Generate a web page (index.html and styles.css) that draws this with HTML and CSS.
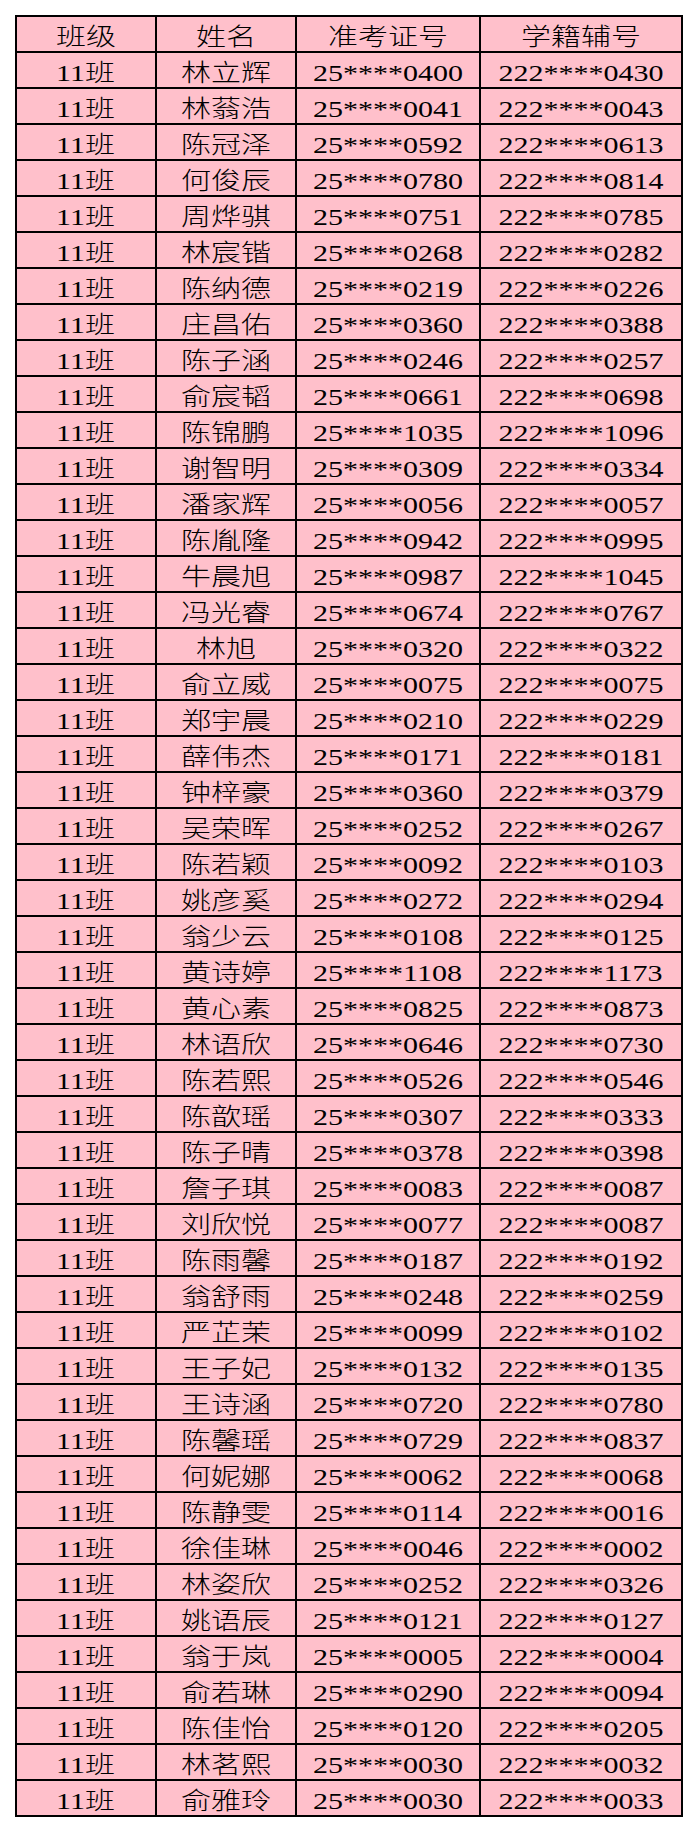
FILE: index.html
```html
<!DOCTYPE html>
<html lang="zh-CN">
<head>
<meta charset="utf-8">
<title>11班名单</title>
<link rel="stylesheet" href="styles.css">
</head>
<body>
<table class="roster">
<colgroup><col class="c1"><col class="c2"><col class="c3"><col class="c4"></colgroup>
<thead>
<tr><th><span class="t">班级</span></th><th><span class="t">姓名</span></th><th><span class="t">准考证号</span></th><th><span class="t">学籍辅号</span></th></tr>
</thead>
<tbody>
<tr><td><span class="t">11班</span></td><td><span class="t">林立辉</span></td><td><span class="t">25****0400</span></td><td><span class="t">222****0430</span></td></tr>
<tr><td><span class="t">11班</span></td><td><span class="t">林蓊浩</span></td><td><span class="t">25****0041</span></td><td><span class="t">222****0043</span></td></tr>
<tr><td><span class="t">11班</span></td><td><span class="t">陈冠泽</span></td><td><span class="t">25****0592</span></td><td><span class="t">222****0613</span></td></tr>
<tr><td><span class="t">11班</span></td><td><span class="t">何俊辰</span></td><td><span class="t">25****0780</span></td><td><span class="t">222****0814</span></td></tr>
<tr><td><span class="t">11班</span></td><td><span class="t">周烨骐</span></td><td><span class="t">25****0751</span></td><td><span class="t">222****0785</span></td></tr>
<tr><td><span class="t">11班</span></td><td><span class="t">林宸锴</span></td><td><span class="t">25****0268</span></td><td><span class="t">222****0282</span></td></tr>
<tr><td><span class="t">11班</span></td><td><span class="t">陈纳德</span></td><td><span class="t">25****0219</span></td><td><span class="t">222****0226</span></td></tr>
<tr><td><span class="t">11班</span></td><td><span class="t">庄昌佑</span></td><td><span class="t">25****0360</span></td><td><span class="t">222****0388</span></td></tr>
<tr><td><span class="t">11班</span></td><td><span class="t">陈子涵</span></td><td><span class="t">25****0246</span></td><td><span class="t">222****0257</span></td></tr>
<tr><td><span class="t">11班</span></td><td><span class="t">俞宸韬</span></td><td><span class="t">25****0661</span></td><td><span class="t">222****0698</span></td></tr>
<tr><td><span class="t">11班</span></td><td><span class="t">陈锦鹏</span></td><td><span class="t">25****1035</span></td><td><span class="t">222****1096</span></td></tr>
<tr><td><span class="t">11班</span></td><td><span class="t">谢智明</span></td><td><span class="t">25****0309</span></td><td><span class="t">222****0334</span></td></tr>
<tr><td><span class="t">11班</span></td><td><span class="t">潘家辉</span></td><td><span class="t">25****0056</span></td><td><span class="t">222****0057</span></td></tr>
<tr><td><span class="t">11班</span></td><td><span class="t">陈胤隆</span></td><td><span class="t">25****0942</span></td><td><span class="t">222****0995</span></td></tr>
<tr><td><span class="t">11班</span></td><td><span class="t">牛晨旭</span></td><td><span class="t">25****0987</span></td><td><span class="t">222****1045</span></td></tr>
<tr><td><span class="t">11班</span></td><td><span class="t">冯光睿</span></td><td><span class="t">25****0674</span></td><td><span class="t">222****0767</span></td></tr>
<tr><td><span class="t">11班</span></td><td><span class="t">林旭</span></td><td><span class="t">25****0320</span></td><td><span class="t">222****0322</span></td></tr>
<tr><td><span class="t">11班</span></td><td><span class="t">俞立威</span></td><td><span class="t">25****0075</span></td><td><span class="t">222****0075</span></td></tr>
<tr><td><span class="t">11班</span></td><td><span class="t">郑宇晨</span></td><td><span class="t">25****0210</span></td><td><span class="t">222****0229</span></td></tr>
<tr><td><span class="t">11班</span></td><td><span class="t">薛伟杰</span></td><td><span class="t">25****0171</span></td><td><span class="t">222****0181</span></td></tr>
<tr><td><span class="t">11班</span></td><td><span class="t">钟梓豪</span></td><td><span class="t">25****0360</span></td><td><span class="t">222****0379</span></td></tr>
<tr><td><span class="t">11班</span></td><td><span class="t">吴荣晖</span></td><td><span class="t">25****0252</span></td><td><span class="t">222****0267</span></td></tr>
<tr><td><span class="t">11班</span></td><td><span class="t">陈若颖</span></td><td><span class="t">25****0092</span></td><td><span class="t">222****0103</span></td></tr>
<tr><td><span class="t">11班</span></td><td><span class="t">姚彦奚</span></td><td><span class="t">25****0272</span></td><td><span class="t">222****0294</span></td></tr>
<tr><td><span class="t">11班</span></td><td><span class="t">翁少云</span></td><td><span class="t">25****0108</span></td><td><span class="t">222****0125</span></td></tr>
<tr><td><span class="t">11班</span></td><td><span class="t">黄诗婷</span></td><td><span class="t">25****1108</span></td><td><span class="t">222****1173</span></td></tr>
<tr><td><span class="t">11班</span></td><td><span class="t">黄心素</span></td><td><span class="t">25****0825</span></td><td><span class="t">222****0873</span></td></tr>
<tr><td><span class="t">11班</span></td><td><span class="t">林语欣</span></td><td><span class="t">25****0646</span></td><td><span class="t">222****0730</span></td></tr>
<tr><td><span class="t">11班</span></td><td><span class="t">陈若熙</span></td><td><span class="t">25****0526</span></td><td><span class="t">222****0546</span></td></tr>
<tr><td><span class="t">11班</span></td><td><span class="t">陈歆瑶</span></td><td><span class="t">25****0307</span></td><td><span class="t">222****0333</span></td></tr>
<tr><td><span class="t">11班</span></td><td><span class="t">陈子晴</span></td><td><span class="t">25****0378</span></td><td><span class="t">222****0398</span></td></tr>
<tr><td><span class="t">11班</span></td><td><span class="t">詹子琪</span></td><td><span class="t">25****0083</span></td><td><span class="t">222****0087</span></td></tr>
<tr><td><span class="t">11班</span></td><td><span class="t">刘欣悦</span></td><td><span class="t">25****0077</span></td><td><span class="t">222****0087</span></td></tr>
<tr><td><span class="t">11班</span></td><td><span class="t">陈雨馨</span></td><td><span class="t">25****0187</span></td><td><span class="t">222****0192</span></td></tr>
<tr><td><span class="t">11班</span></td><td><span class="t">翁舒雨</span></td><td><span class="t">25****0248</span></td><td><span class="t">222****0259</span></td></tr>
<tr><td><span class="t">11班</span></td><td><span class="t">严芷茉</span></td><td><span class="t">25****0099</span></td><td><span class="t">222****0102</span></td></tr>
<tr><td><span class="t">11班</span></td><td><span class="t">王子妃</span></td><td><span class="t">25****0132</span></td><td><span class="t">222****0135</span></td></tr>
<tr><td><span class="t">11班</span></td><td><span class="t">王诗涵</span></td><td><span class="t">25****0720</span></td><td><span class="t">222****0780</span></td></tr>
<tr><td><span class="t">11班</span></td><td><span class="t">陈馨瑶</span></td><td><span class="t">25****0729</span></td><td><span class="t">222****0837</span></td></tr>
<tr><td><span class="t">11班</span></td><td><span class="t">何妮娜</span></td><td><span class="t">25****0062</span></td><td><span class="t">222****0068</span></td></tr>
<tr><td><span class="t">11班</span></td><td><span class="t">陈静雯</span></td><td><span class="t">25****0114</span></td><td><span class="t">222****0016</span></td></tr>
<tr><td><span class="t">11班</span></td><td><span class="t">徐佳琳</span></td><td><span class="t">25****0046</span></td><td><span class="t">222****0002</span></td></tr>
<tr><td><span class="t">11班</span></td><td><span class="t">林姿欣</span></td><td><span class="t">25****0252</span></td><td><span class="t">222****0326</span></td></tr>
<tr><td><span class="t">11班</span></td><td><span class="t">姚语辰</span></td><td><span class="t">25****0121</span></td><td><span class="t">222****0127</span></td></tr>
<tr><td><span class="t">11班</span></td><td><span class="t">翁于岚</span></td><td><span class="t">25****0005</span></td><td><span class="t">222****0004</span></td></tr>
<tr><td><span class="t">11班</span></td><td><span class="t">俞若琳</span></td><td><span class="t">25****0290</span></td><td><span class="t">222****0094</span></td></tr>
<tr><td><span class="t">11班</span></td><td><span class="t">陈佳怡</span></td><td><span class="t">25****0120</span></td><td><span class="t">222****0205</span></td></tr>
<tr><td><span class="t">11班</span></td><td><span class="t">林茗熙</span></td><td><span class="t">25****0030</span></td><td><span class="t">222****0032</span></td></tr>
<tr><td><span class="t">11班</span></td><td><span class="t">俞雅玲</span></td><td><span class="t">25****0030</span></td><td><span class="t">222****0033</span></td></tr>
</tbody>
</table>
</body>
</html>
```

FILE: styles.css
```css
html, body {
  margin: 0;
  padding: 0;
  background: #ffffff;
}

.roster {
  margin: 15px;
  table-layout: fixed;
  width: 668px;
  border-collapse: separate;
  border-spacing: 2px;
  background: #000000;
  font-family: "Liberation Serif", "Noto Sans CJK SC", serif;
  font-size: 24px;
  font-weight: 300;
  color: #000000;
}

.c1 { width: 138px; }
.c2 { width: 138px; }
.c3 { width: 182px; }
.c4 { width: 200px; }

.roster th,
.roster td {
  background: #ffc0cb;
  height: 34px;
  padding: 0;
  line-height: 34px;
  text-align: center;
  font-weight: 300;
  white-space: nowrap;
  overflow: hidden;
}

.t {
  display: inline-block;
  transform: translateY(3px) scaleX(1.25);
}
```
